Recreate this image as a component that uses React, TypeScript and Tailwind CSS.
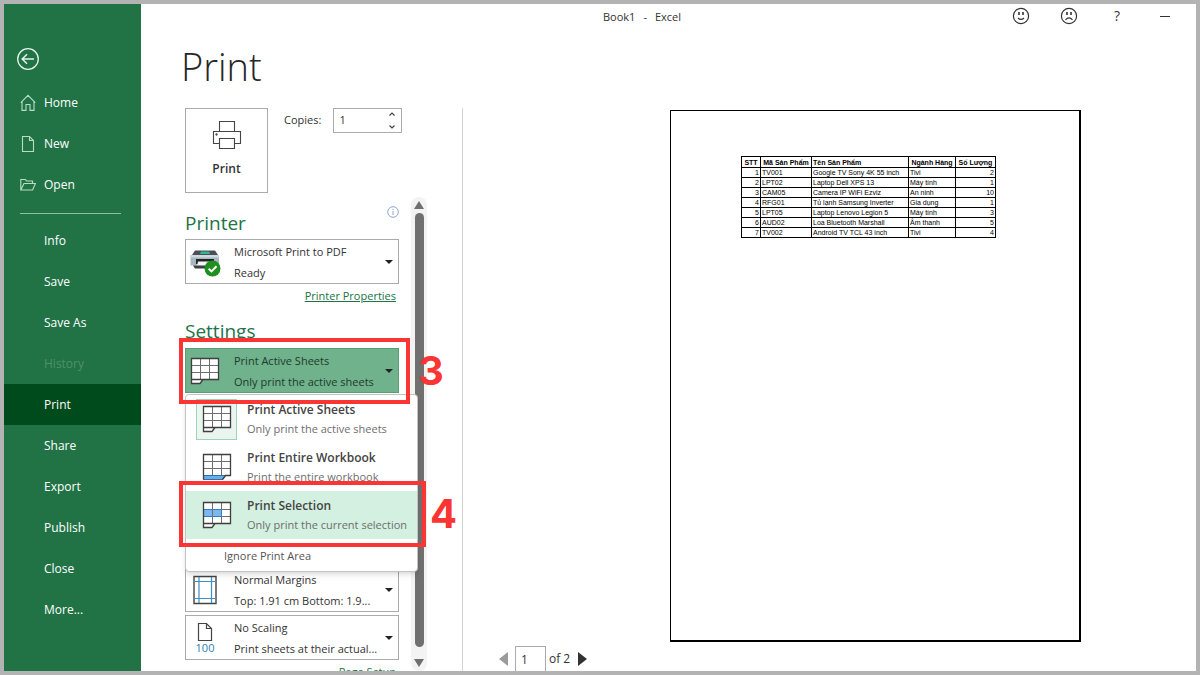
import React, { useState } from 'react';

const mainLinks = [
  { name: 'Home', icon: 'home' },
  { name: 'New', icon: 'new' },
  { name: 'Open', icon: 'open' },
];

const subLinks = ['Info', 'Save', 'Save As', 'History', 'Print', 'Share', 'Export', 'Publish', 'Close', 'More...'];

const printOptions = [
  { id: 'active', title: 'Print Active Sheets', text: 'Only print the active sheets' },
  { id: 'workbook', title: 'Print Entire Workbook', text: 'Print the entire workbook' },
  { id: 'selection', title: 'Print Selection', text: 'Only print the current selection' },
];

const rows = [
  ['1', 'TV001', 'Google TV Sony 4K 55 inch', 'Tivi', '2'],
  ['2', 'LPT02', 'Laptop Dell XPS 13', 'Máy tính', '1'],
  ['3', 'CAM05', 'Camera IP WiFi Ezviz', 'An ninh', '10'],
  ['4', 'RFG01', 'Tủ lạnh Samsung Inverter', 'Gia dụng', '1'],
  ['5', 'LPT05', 'Laptop Lenovo Legion 5', 'Máy tính', '3'],
  ['6', 'AUD02', 'Loa Bluetooth Marshall', 'Âm thanh', '5'],
  ['7', 'TV002', 'Android TV TCL 43 inch', 'Tivi', '4'],
];

const NavIcon = ({ name }: { name: string }) => (
  <svg className="w-4 h-[18px] shrink-0" viewBox="0 0 16 18" fill="none" stroke="#b9dcc6" strokeWidth="1.1">
    {name === 'home' && <path d="M.8 8.6 8 1.4l7.2 7.2M2 7.6V16.4H6V10.5H10V16.4H14V7.6" />}
    {name === 'new' && <path d="M2.5 1.5H9.5L13.5 5.5V16.5H2.5ZM9.500 1.500V5.500H13.500" />}
    {name === 'open' && <path d="M.8 14V3.5H5.5L6.5 5H12.5V7.5M.8 14 4 7.5H15.400L12.600 14Z" />}
  </svg>
);

// Grid of cells with a folded sheet tab under the bottom-left corner
const SheetIcon = ({ kind }: { kind: string }) => (
  <svg className="w-[30px] h-[28px] shrink-0" viewBox="0 0 30 28" fill="none">
    <path d="M1.5 1.5H28.5V22.5H13L10 26.5H1.5Z" fill="#fff" />
    {kind === 'selection' && <path d="M1.5 8.5H19.5V15.5H1.5Z" fill="#7cb8ee" />}
    <path d="M1.5 8.5H28.5M1.5 15.5H28.5M10.5 1.5V22.5M19.5 1.5V22.5" stroke="#6e6e6e" />
    {kind === 'selection' && <path d="M1.5 8.5H19.5V15.5H1.5Z" stroke="#2f7fc4" />}
    {kind === 'workbook' ? (
      <>
        <path d="M1.5 22.5H23.5L20.5 26.5H1.5Z" fill="#6aaee8" stroke="#2f6fa8" />
        <path d="M1.5 26.5V1.5H28.5V22.5H23.5L20.5 26.5" stroke="#3f3f3f" strokeWidth="1.3" />
      </>
    ) : (
      <path d="M1.5 26.5V1.5H28.5V22.5H13L10 26.5ZM1.500 22.500H13" stroke="#3f3f3f" strokeWidth="1.3" />
    )}
  </svg>
);

const PrinterIcon = () => (
  <svg className="w-8 h-8 shrink-0" viewBox="0 0 32 32">
    <path d="M6 4.5H26L29 9H3Z" fill="#4a4f55" />
    <path d="M12 5.5H20L21 8H11Z" fill="#2fb98a" />
    <path d="M1.5 9H30V19.500H1.500Z" fill="#a9b5c0" />
    <path d="M1.5 9H30V11.500H1.500Z" fill="#cfd8df" />
    <path d="M7 13H25V18H7Z" fill="#1f2123" />
    <path d="M9 15.500H23V20H8Z" fill="#f4f6f8" />
    <path d="M4 19.500H20V22.500H6Z" fill="#3b3e42" />
    <circle cx="23.500" cy="22.500" r="8" fill="#1f8f1f" />
    <path d="m19.700 22.700 2.800 2.700 5-5.200" fill="none" stroke="#fff" strokeWidth="2" />
  </svg>
);

const MarginsIcon = () => (
  <svg className="w-[26px] h-[30px] shrink-0" viewBox="0 0 26 30" fill="none">
    <path d="M2 1.500H24V28.500H2Z" stroke="#444" strokeWidth="1.400" fill="#fff" />
    <path d="M7 2V28M19.500 2V28M3 6.500H23M3 23.500H23" stroke="#3b8fc4" strokeWidth="1.200" />
  </svg>
);

const ScalingIcon = () => (
  <span className="flex flex-col items-center">
    <svg className="w-4 h-5" viewBox="0 0 16 20" fill="none" stroke="#444" strokeWidth="1.200">
      <path d="M1.500 1.500H9.500L14.500 6.500V18.500H1.500ZM9.500 1.500V6.500H14.500" />
    </svg>
    <span className="text-[11px] leading-[11px] text-[#2c80b4]">100</span>
  </span>
);

interface SettingBoxProps {
  icon: React.ReactNode;
  title: string;
  text: string;
  active?: boolean;
}

const SettingBox: React.FC<SettingBoxProps> = ({ icon, title, text, active }) => (
  <button
    type="button"
    aria-haspopup="listbox"
    aria-expanded={!!active}
    className={`flex items-center w-full h-[45px] pl-1 pr-[5px] border text-left text-[11px] ${
      active ? 'bg-[#6fb28b] border-[#5a9d77] text-[#1f3b2b]' : 'bg-white border-[#ababab] text-[#333]'
    }`}
  >
    <span className="flex justify-center w-[30px] mr-3.5 shrink-0">{icon}</span>
    <span className="flex-1 min-w-0 whitespace-nowrap">
      <span className="block leading-[21px]">{title}</span>
      <span className="block leading-[21px]">{text}</span>
    </span>
    <svg className="w-2 h-1 shrink-0" viewBox="0 0 8 4" fill="#222">
      <path d="M0 0H8L4 4Z" />
    </svg>
  </button>
);

const Face = ({ sad }: { sad?: boolean }) => (
  <svg className="w-[18px] h-[18px]" viewBox="0 0 18 18" fill="none" stroke="#333" strokeWidth="1.200">
    <circle cx="9" cy="9" r="7.600" />
    <path d="M7 5V8M11 5V8" strokeWidth="1.600" />
    <path d={sad ? 'M5.500 12.800Q9 9 12.500 12.800' : 'M6 11Q9 13.800 12 11'} />
  </svg>
);

export default function App() {
  const [copies, setCopies] = useState(1);
  const [page, setPage] = useState('1');
  const [hovered, setHovered] = useState('selection');

  return (
    <div className="flex h-screen overflow-hidden border-4 border-[#b3b3b3] bg-white text-[12px] text-[#333] font-['Open_Sans',sans-serif]">
      <nav className="w-[137px] shrink-0 bg-[#217346] text-white">
        <button type="button" aria-label="Back" className="block ml-3 mt-[43px]">
          <svg className="w-6 h-6" viewBox="0 0 24 24" fill="none" stroke="#e4f3ea" strokeWidth="1.300">
            <circle cx="12" cy="12" r="10.300" />
            <path d="M18 12H6.500M11 7.200 6.200 12l4.800 4.800" strokeWidth="1.500" />
          </svg>
        </button>
        <ul className="mt-[11px]">
          {mainLinks.map((link) => (
            <li key={link.name}>
              <a href="#" className="flex items-center gap-2 h-[41px] pl-4">
                <NavIcon name={link.icon} />
                {link.name}
              </a>
            </li>
          ))}
        </ul>
        <hr className="ml-4 mr-5 mt-2 mb-1.5 border-[#8dbf9f]" />
        <ul>
          {subLinks.map((name) => (
            <li key={name}>
              <a
                href="#"
                className={`flex items-center h-[41px] pt-px pl-10 ${name === 'Print' ? 'bg-[#004b1c]' : ''} ${
                  name === 'History' ? 'text-[#4f9069]' : ''
                }`}
              >
                {name}
              </a>
            </li>
          ))}
        </ul>
      </nav>

      <main className="flex flex-col flex-1 min-w-0">
        <header className="flex items-center h-6 pl-[462px] pr-[7px]">
          <div className="flex gap-2 pt-0.5 text-[11px]">
            <span>Book1</span>
            <span>-</span>
            <span>Excel</span>
          </div>
          <div className="flex ml-auto">
            <button type="button" aria-label="Send a smile" className="flex justify-center items-center w-12"><Face /></button>
            <button type="button" aria-label="Send a frown" className="flex justify-center items-center w-12"><Face sad /></button>
            <button type="button" className="w-12 text-sm">?</button>
            <button type="button" aria-label="Minimize" className="flex justify-center items-center w-12">
              <span className="w-[10px] h-px bg-[#333]" />
            </button>
          </div>
        </header>

        <h1 className="mt-3 mb-4 pl-10 text-[38px] leading-[52px] font-light text-[#262626]">Print</h1>

        <div className="flex flex-1 min-h-0">
          <section className="flex flex-col w-[322px] shrink-0 pl-11 border-r border-[#d4d4d4]">
            <div className="flex items-start gap-4">
              <button type="button" className="flex flex-col items-center w-[83px] h-[85px] pt-[11px] border border-[#ababab] font-semibold">
                <svg className="w-[30px] h-[30px]" viewBox="0 0 30 30" fill="#fff" stroke="#444" strokeWidth="1.100">
                  <path d="M7.500 11.500V1.500H22.500V11.500" />
                  <path d="M1.500 11.500H28.500V23.500H1.500Z" />
                  <path d="M7.500 18.500H22.500V28.500H7.500Z" />
                  <circle cx="4.500" cy="14.500" r=".6" fill="#222" />
                </svg>
                <span className="mt-[10px] leading-[18px]">Print</span>
              </button>
              <div className="flex gap-3 text-[11px]">
                <label htmlFor="copies" className="leading-6">Copies:</label>
                <div className="flex w-[69px] h-[25px] border border-[#ababab]">
                  <input
                    id="copies"
                    type="text"
                    className="w-12 pl-[5px] outline-none"
                    value={copies}
                    onChange={(e) => setCopies(Number(e.target.value) || 1)}
                  />
                  <div className="flex flex-col justify-between ml-auto py-[3px] pr-[5px]">
                    <button type="button" aria-label="More copies" onClick={() => setCopies(copies + 1)}>
                      <svg className="w-2 h-1" viewBox="0 0 8 4" fill="none" stroke="#444" strokeWidth="1.200"><path d="m1.500 3.500 2.500-2.500 2.500 2.500" /></svg>
                    </button>
                    <button type="button" aria-label="Fewer copies" onClick={() => setCopies(Math.max(1, copies - 1))}>
                      <svg className="w-2 h-1" viewBox="0 0 8 4" fill="none" stroke="#444" strokeWidth="1.200"><path d="m1.500 .5 2.500 2.500 2.500-2.500" /></svg>
                    </button>
                  </div>
                </div>
              </div>
            </div>

            <div className="flex flex-1 min-h-0 mt-1 gap-3">
              <div className="w-[214px] shrink-0">
                <div className="flex justify-between items-start pt-[9px]">
                  <h2 className="pt-0.5 text-[19px] leading-[30px] text-[#217346]">Printer</h2>
                  <svg className="w-3 h-3" viewBox="0 0 12 12" fill="none" stroke="#8ba6cf">
                    <circle cx="6" cy="6" r="5.300" />
                    <path d="M6 5V9M6 2.800V4" />
                  </svg>
                </div>
                <div className="mt-px">
                  <SettingBox icon={<PrinterIcon />} title="Microsoft Print to PDF" text="Ready" />
                </div>
                <div className="mt-[3px] pr-[3px] text-right text-[11px] leading-[18px]">
                  <a href="#" className="text-[#217346] underline">Printer Properties</a>
                </div>

                <h2 className="mt-[11px] mb-0.5 text-[19px] leading-[30px] text-[#217346]">Settings</h2>
                <div className="relative">
                  <SettingBox
                    active
                    icon={<SheetIcon kind="active" />}
                    title="Print Active Sheets"
                    text="Only print the active sheets"
                  />
                  <div className="absolute z-20 -left-1.5 -top-2.5 w-[231px] h-[66px] border-4 border-[#fb3434] pointer-events-none" />
                  <span className="absolute z-20 left-[233px] top-0.5 text-[40px] leading-[42px] font-bold text-[#fb3434] font-['Inter',sans-serif]">3</span>
                </div>

                <div role="listbox" aria-label="Print what" className="relative z-10 w-[233px] -mb-[5px] mt-px border border-[#c3c3c3] rounded bg-white shadow-md">
                  {printOptions.map((option) => (
                    <button
                      key={option.id}
                      type="button"
                      role="option"
                      aria-selected={option.id === 'active'}
                      onMouseEnter={() => setHovered(option.id)}
                      className={`flex items-center w-full h-12 pl-2.5 text-left whitespace-nowrap ${hovered === option.id ? 'bg-[#d3f0e0]' : ''}`}
                    >
                      <span
                        className={`flex justify-center items-center w-[41px] h-[41px] shrink-0 border ${
                          option.id === 'active' ? 'bg-[#e9f5ee] border-[#9fd3b7]' : 'border-transparent'
                        }`}
                      >
                        <SheetIcon kind={option.id} />
                      </span>
                      <span className="pl-2.5">
                        <span className="block leading-[19px] font-semibold text-[#444]">{option.title}</span>
                        <span className="block text-[11px] leading-[19px] text-[#6e6e6e]">{option.text}</span>
                      </span>
                    </button>
                  ))}
                  <button type="button" className="w-full h-8 pt-0.5 pl-[38px] text-left text-[11px] text-[#555]">Ignore Print Area</button>
                  <div className="absolute -left-[7px] top-[86px] w-[247px] h-[66px] border-4 border-[#fb3434] pointer-events-none" />
                  <span className="absolute left-[244px] top-[98px] text-[40px] leading-[42px] font-bold text-[#fb3434] font-['Inter',sans-serif]">4</span>
                </div>

                <SettingBox icon={<MarginsIcon />} title="Normal Margins" text="Top: 1.91 cm Bottom: 1.9..." />
                <div className="mt-[3px]">
                  <SettingBox icon={<ScalingIcon />} title="No Scaling" text="Print sheets at their actual..." />
                </div>
                <div className="mt-[3px] pr-[3px] text-right text-[11px] leading-[18px]">
                  <a href="#" className="text-[#217346] underline">Page Setup</a>
                </div>
              </div>

              <div className="flex flex-col items-center w-4 py-1 rounded-lg bg-[#f3f3f3]">
                <svg className="w-[10px] h-2 shrink-0" viewBox="0 0 10 8" fill="#6f6f6f"><path d="M5 0 10 8H0Z" /></svg>
                <div className="flex-1 w-[9px] mt-1 mb-3 rounded-full bg-[#707070]" />
                <svg className="w-[10px] h-2 shrink-0" viewBox="0 0 10 8" fill="#6f6f6f"><path d="M0 0H10L5 8Z" /></svg>
              </div>
            </div>
          </section>

          <section className="flex-1 min-w-0 pt-0.5">
            <div className="ml-[207px] mr-[115px] aspect-[411/532] pt-[45px] pl-[70px] bg-white border border-black border-r-2 border-b-2">
              <table className="w-[255px] table-fixed border-collapse border border-black text-[7px] leading-[9px] text-black whitespace-nowrap font-['Liberation_Sans',sans-serif]">
                <thead>
                  <tr className="h-[11px]">
                    <th className="w-[19px] p-0 border border-black">STT</th>
                    <th className="w-[51px] p-0 border border-black">Mã Sản Phẩm</th>
                    <th className="w-[97px] p-0 pl-px border border-black text-left">Tên Sản Phẩm</th>
                    <th className="w-[47px] p-0 border border-black">Ngành Hàng</th>
                    <th className="p-0 border border-black">Số Lượng</th>
                  </tr>
                </thead>
                <tbody>
                  {rows.map((row) => (
                    <tr key={row[0]} className="h-[10px]">
                      {row.map((cell, i) => (
                        <td key={i} className={`p-0 px-px border border-black ${i === 0 || i === 4 ? 'text-right' : ''}`}>
                          {cell}
                        </td>
                      ))}
                    </tr>
                  ))}
                </tbody>
              </table>
            </div>

            <div className="flex items-center mt-1 pl-9">
              <button type="button" aria-label="Previous page">
                <svg className="w-[9px] h-[14px]" viewBox="0 0 9 14" fill="#9b9b9b"><path d="M9 0V14L0 7Z" /></svg>
              </button>
              <input
                type="text"
                aria-label="Current page"
                className="w-[31px] h-[26px] ml-[7px] mr-[3px] pl-[5px] border border-[#ababab] outline-none"
                value={page}
                onChange={(e) => setPage(e.target.value)}
              />
              <span>of 2</span>
              <button type="button" aria-label="Next page" className="ml-2">
                <svg className="w-[9px] h-[14px]" viewBox="0 0 9 14" fill="#333"><path d="M0 0V14L9 7Z" /></svg>
              </button>
            </div>
          </section>
        </div>
      </main>
    </div>
  );
}
